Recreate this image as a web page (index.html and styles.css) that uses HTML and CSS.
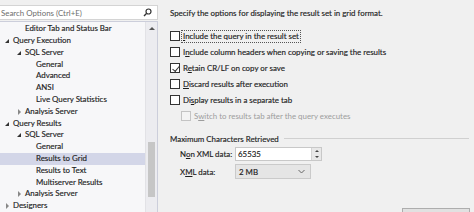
FILE: index.html
```html
<!DOCTYPE html>
<html lang="en">
<head>
    <meta charset="UTF-8">
    <title>Options - Results to Grid</title>
    <link rel="stylesheet" href="styles.css">
</head>
<body>
    <div class="options-dialog">
        <div class="nav-section">
            <div class="search-box">
                <span class="search-text">Search Options (Ctrl+E)</span>
                <svg class="search-icon" width="9" height="9" viewBox="0 0 9 9">
                    <circle cx="5.5" cy="3.5" r="2.5" fill="none" stroke="#333" stroke-width="1.2"/>
                    <line x1="3.7" y1="5.3" x2="1" y2="8" stroke="#333" stroke-width="1.4"/>
                </svg>
            </div>
            <div class="tree">
                <ul class="tree-list">
                    <li class="level-1 leaf">Editor Tab and Status Bar</li>
                    <li class="level-0 open">Query Execution</li>
                    <li class="level-1 open">SQL Server</li>
                    <li class="level-2 leaf">General</li>
                    <li class="level-2 leaf">Advanced</li>
                    <li class="level-2 leaf">ANSI</li>
                    <li class="level-2 leaf">Live Query Statistics</li>
                    <li class="level-1 closed">Analysis Server</li>
                    <li class="level-0 open">Query Results</li>
                    <li class="level-1 open">SQL Server</li>
                    <li class="level-2 leaf">General</li>
                    <li class="level-2 leaf selected">Results to Grid</li>
                    <li class="level-2 leaf">Results to Text</li>
                    <li class="level-2 leaf">Multiserver Results</li>
                    <li class="level-1 closed">Analysis Server</li>
                    <li class="level-0 closed">Designers</li>
                </ul>
                <div class="scrollbar">
                    <span class="scroll-up"></span>
                    <div class="scroll-thumb"></div>
                </div>
            </div>
        </div>

        <div class="content-section">
            <p class="intro">Specify the options for displaying the result set in grid format.</p>

            <div class="check-row">
                <span class="check-box"></span>
                <span class="check-label focused"><u>I</u>nclude the query in the result set</span>
            </div>
            <div class="check-row">
                <span class="check-box"></span>
                <span class="check-label">I<u>n</u>clude column headers when copying or saving the results</span>
            </div>
            <div class="check-row">
                <span class="check-box checked"></span>
                <span class="check-label">R<u>e</u>tain CR/LF on copy or save</span>
            </div>
            <div class="check-row">
                <span class="check-box"></span>
                <span class="check-label"><u>D</u>iscard results after execution</span>
            </div>
            <div class="check-row">
                <span class="check-box"></span>
                <span class="check-label">Di<u>s</u>play results in a separate tab</span>
            </div>
            <div class="check-row sub disabled">
                <span class="check-box"></span>
                <span class="check-label">S<u>w</u>itch to results tab after the query executes</span>
            </div>

            <div class="group-title">
                <span>Maximum Characters Retrieved</span>
            </div>

            <div class="field-row">
                <label class="field-label">N<u>o</u>n XML data:</label>
                <div class="spin-input">
                    <span class="spin-value">65535</span>
                    <span class="spin-buttons">
                        <span class="spin-up"></span>
                        <span class="spin-down"></span>
                    </span>
                </div>
            </div>
            <div class="field-row">
                <label class="field-label">X<u>M</u>L data:</label>
                <div class="select-box">
                    <span>2 MB</span>
                    <svg width="7" height="5" viewBox="0 0 7 5">
                        <polyline points="0.5,1 3.5,4 6.5,1" fill="none" stroke="#666" stroke-width="1"/>
                    </svg>
                </div>
            </div>

            <div class="button-row">
                <span class="dialog-btn"></span>
            </div>
        </div>
    </div>
</body>
</html>
```

FILE: styles.css
```css
* {
    margin: 0;
    padding: 0;
    box-sizing: border-box;
}

body {
    font-family: Lato, 'Noto Sans', sans-serif;
    font-size: 7.9px;
    color: #1e1e1e;
    background-color: #f0f0f0;
    width: 474px;
    height: 212px;
    overflow: hidden;
    -webkit-text-stroke: 0.15px #1e1e1e;
}

u {
    text-decoration: underline;
    text-underline-offset: 1px;
}

.options-dialog {
    display: flex;
    height: 212px;
}

/* left side: search + tree */

.nav-section {
    width: 158px;
    padding-top: 5px;
    display: flex;
    flex-direction: column;
}

.search-box {
    height: 18px;
    background: white;
    border: 1px solid #d4d4d4;
    border-left: none;
    display: flex;
    align-items: center;
    justify-content: space-between;
    padding: 0 5px 0 0;
    margin-bottom: 1px;
}

.search-text {
    color: #6d6d6d;
    -webkit-text-stroke: 0;
    padding-left: 1px;
}

.tree {
    flex: 1;
    display: flex;
    background: #f7f7f9;
    border: 1px solid #cccedb;
    border-left: none;
    border-bottom: none;
}

.tree-list {
    list-style: none;
    flex: 1;
    padding-top: 1px;
}

.tree-list li {
    height: 11.8px;
    line-height: 11.8px;
    white-space: nowrap;
    position: relative;
}

.tree-list li.level-0 { padding-left: 13px; }
.tree-list li.level-1 { padding-left: 25px; }
.tree-list li.level-2 { padding-left: 36px; }

.tree-list li.open::before,
.tree-list li.closed::before {
    content: '';
    position: absolute;
    top: 4px;
}

.tree-list li.open::before {
    border-left: 4px solid transparent;
    border-bottom: 4px solid #333;
    margin-left: -8px;
}

.tree-list li.closed::before {
    border-top: 3px solid transparent;
    border-bottom: 3px solid transparent;
    border-left: 3px solid #888;
    margin-left: -7px;
    top: 3px;
}

.tree-list li.selected {
    background: #d3d6e8;
}

.scrollbar {
    width: 12px;
    background: #ececf0;
    border-left: 1px solid #e2e2e6;
    position: relative;
}

.scroll-up {
    position: absolute;
    top: 5px;
    left: 3px;
    border-left: 3px solid transparent;
    border-right: 3px solid transparent;
    border-bottom: 3px solid #555;
}

.scroll-thumb {
    position: absolute;
    left: 2px;
    right: 2px;
    top: 120px;
    height: 55px;
    background: #c6c6c6;
}

/* right side: options */

.content-section {
    flex: 1;
    padding: 8px 0 0 12px;
    display: flex;
    flex-direction: column;
}

.intro {
    height: 11px;
    line-height: 11px;
    margin-bottom: 9px;
}

.check-row {
    display: flex;
    align-items: center;
    height: 16px;
}

.check-row.sub {
    padding-left: 11px;
}

.check-box {
    width: 10px;
    height: 10px;
    border: 1px solid #333;
    background: white;
    margin-right: 2px;
    position: relative;
}

.check-box.checked::after {
    content: '';
    position: absolute;
    left: 1px;
    top: 0;
    width: 6px;
    height: 3px;
    border-left: 1px solid #333;
    border-bottom: 1px solid #333;
    transform: translate(0.5px, 2px) rotate(-50deg);
}

.check-label {
    padding: 0 1px;
    line-height: 11px;
}

.check-label.focused {
    outline: 1px dotted #555;
}

.check-row.disabled .check-box {
    border-color: #c4c4c4;
    background: #f4f4f4;
}

.check-row.disabled .check-label {
    color: #9d9d9d;
    -webkit-text-stroke: 0;
}

.group-title {
    display: flex;
    align-items: center;
    margin-top: 9px;
    height: 11px;
    padding-right: 5px;
}

.group-title::after {
    content: '';
    flex: 1;
    height: 1px;
    background: #d0d0d0;
    margin-left: 5px;
}

.field-row {
    display: flex;
    align-items: center;
    padding-left: 10px;
    margin-top: 3px;
}

.field-label {
    width: 55px;
    white-space: nowrap;
}

.spin-input {
    width: 87px;
    height: 14px;
    background: white;
    border: 1px solid #c8c8c8;
    display: flex;
    justify-content: space-between;
}

.spin-value {
    padding-left: 2px;
    line-height: 12px;
}

.spin-buttons {
    width: 10px;
    display: flex;
    flex-direction: column;
    background: #e8e8e8;
    border-left: 1px solid #d4d4d4;
}

.spin-up,
.spin-down {
    flex: 1;
    position: relative;
}

.spin-up::after,
.spin-down::after {
    content: '';
    position: absolute;
    left: 3px;
    top: 2px;
    border-left: 2px solid transparent;
    border-right: 2px solid transparent;
}

.spin-up::after { border-bottom: 2px solid #444; }
.spin-down::after { border-top: 2px solid #444; }

.select-box {
    width: 76px;
    height: 15px;
    background: #e5e5e5;
    border: 1px solid #cacaca;
    display: flex;
    align-items: center;
    justify-content: space-between;
    padding: 0 5px 0 3px;
}

.button-row {
    margin-top: auto;
    display: flex;
    justify-content: flex-end;
    padding-right: 4px;
}

.dialog-btn {
    width: 68px;
    height: 4px;
    border: 1px solid #adadad;
    border-bottom: none;
    background: #e1e1e1;
}
```
